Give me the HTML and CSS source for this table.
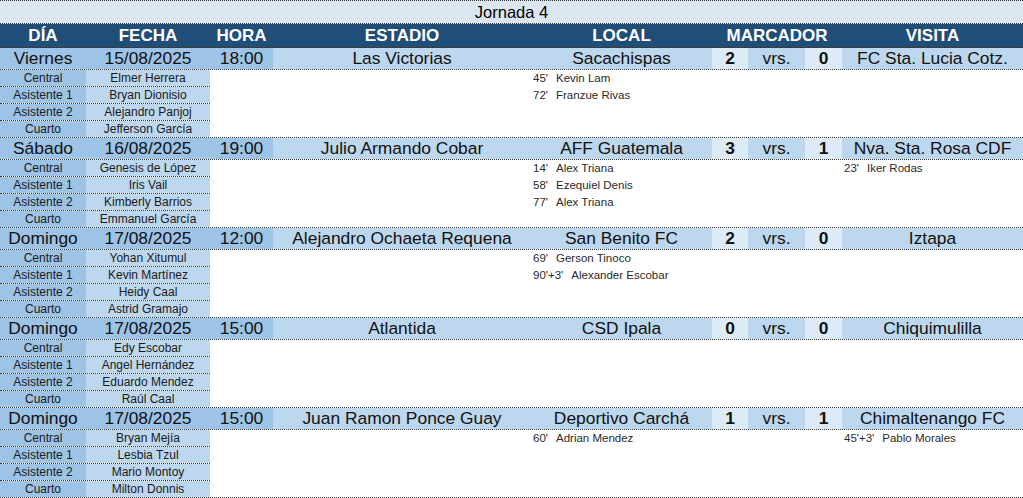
FILE: index.html
```html
<!DOCTYPE html>
<html lang="es">
<head>
<meta charset="utf-8">
<title>Jornada 4</title>
<link rel="stylesheet" href="styles.css">
</head>
<body>
<div class="sheet">
  <div class="title">Jornada 4</div>
  <div class="head">
    <div>DÍA</div><div>FECHA</div><div>HORA</div><div>ESTADIO</div><div>LOCAL</div><div class="span3">MARCADOR</div><div>VISITA</div>
  </div>

  <div class="match">
    <div class="row">
      <div class="c dk">Viernes</div><div class="c dk">15/08/2025</div><div class="c dk">18:00</div>
      <div class="c">Las Victorias</div><div class="c">Sacachispas</div>
      <div class="c sc">2</div><div class="c">vrs.</div><div class="c sc">0</div>
      <div class="c">FC Sta. Lucia Cotz.</div>
    </div>
    <div class="body">
      <div class="refs">
        <div class="ref"><span class="role">Central</span><span class="name">Elmer Herrera</span></div>
        <div class="ref"><span class="role">Asistente 1</span><span class="name">Bryan Dionisio</span></div>
        <div class="ref"><span class="role">Asistente 2</span><span class="name">Alejandro Panjoj</span></div>
        <div class="ref"><span class="role">Cuarto</span><span class="name">Jefferson García</span></div>
      </div>
      <div class="gap"></div>
      <div class="goals home">
        <div class="goal"><span class="min">45'</span>Kevin Lam</div>
        <div class="goal"><span class="min">72'</span>Franzue Rivas</div>
      </div>
      <div class="goals away"></div>
    </div>
  </div>

  <div class="match">
    <div class="row">
      <div class="c dk">Sábado</div><div class="c dk">16/08/2025</div><div class="c dk">19:00</div>
      <div class="c">Julio Armando Cobar</div><div class="c">AFF Guatemala</div>
      <div class="c sc">3</div><div class="c">vrs.</div><div class="c sc">1</div>
      <div class="c">Nva. Sta. Rosa CDF</div>
    </div>
    <div class="body">
      <div class="refs">
        <div class="ref"><span class="role">Central</span><span class="name">Genesis de López</span></div>
        <div class="ref"><span class="role">Asistente 1</span><span class="name">Iris Vail</span></div>
        <div class="ref"><span class="role">Asistente 2</span><span class="name">Kimberly Barrios</span></div>
        <div class="ref"><span class="role">Cuarto</span><span class="name">Emmanuel García</span></div>
      </div>
      <div class="gap"></div>
      <div class="goals home">
        <div class="goal"><span class="min">14'</span>Alex Triana</div>
        <div class="goal"><span class="min">58'</span>Ezequiel Denis</div>
        <div class="goal"><span class="min">77'</span>Alex Triana</div>
      </div>
      <div class="goals away">
        <div class="goal"><span class="min">23'</span>Iker Rodas</div>
      </div>
    </div>
  </div>

  <div class="match">
    <div class="row">
      <div class="c dk">Domingo</div><div class="c dk">17/08/2025</div><div class="c dk">12:00</div>
      <div class="c">Alejandro Ochaeta Requena</div><div class="c">San Benito FC</div>
      <div class="c sc">2</div><div class="c">vrs.</div><div class="c sc">0</div>
      <div class="c">Iztapa</div>
    </div>
    <div class="body">
      <div class="refs">
        <div class="ref"><span class="role">Central</span><span class="name">Yohan Xitumul</span></div>
        <div class="ref"><span class="role">Asistente 1</span><span class="name">Kevin Martínez</span></div>
        <div class="ref"><span class="role">Asistente 2</span><span class="name">Heidy Caal</span></div>
        <div class="ref"><span class="role">Cuarto</span><span class="name">Astrid Gramajo</span></div>
      </div>
      <div class="gap"></div>
      <div class="goals home">
        <div class="goal"><span class="min">69'</span>Gerson Tinoco</div>
        <div class="goal"><span class="min">90'+3'</span>Alexander Escobar</div>
      </div>
      <div class="goals away"></div>
    </div>
  </div>

  <div class="match">
    <div class="row">
      <div class="c dk">Domingo</div><div class="c dk">17/08/2025</div><div class="c dk">15:00</div>
      <div class="c">Atlantida</div><div class="c">CSD Ipala</div>
      <div class="c sc">0</div><div class="c">vrs.</div><div class="c sc">0</div>
      <div class="c">Chiquimulilla</div>
    </div>
    <div class="body">
      <div class="refs">
        <div class="ref"><span class="role">Central</span><span class="name">Edy Escobar</span></div>
        <div class="ref"><span class="role">Asistente 1</span><span class="name">Angel Hernández</span></div>
        <div class="ref"><span class="role">Asistente 2</span><span class="name">Eduardo Mendez</span></div>
        <div class="ref"><span class="role">Cuarto</span><span class="name">Raúl Caal</span></div>
      </div>
      <div class="gap"></div>
      <div class="goals home"></div>
      <div class="goals away"></div>
    </div>
  </div>

  <div class="match">
    <div class="row">
      <div class="c dk">Domingo</div><div class="c dk">17/08/2025</div><div class="c dk">15:00</div>
      <div class="c">Juan Ramon Ponce Guay</div><div class="c">Deportivo Carchá</div>
      <div class="c sc">1</div><div class="c">vrs.</div><div class="c sc">1</div>
      <div class="c">Chimaltenango FC</div>
    </div>
    <div class="body">
      <div class="refs">
        <div class="ref"><span class="role">Central</span><span class="name">Bryan Mejía</span></div>
        <div class="ref"><span class="role">Asistente 1</span><span class="name">Lesbia Tzul</span></div>
        <div class="ref"><span class="role">Asistente 2</span><span class="name">Mario Montoy</span></div>
        <div class="ref"><span class="role">Cuarto</span><span class="name">Milton Donnis</span></div>
      </div>
      <div class="gap"></div>
      <div class="goals home">
        <div class="goal"><span class="min">60'</span>Adrian Mendez</div>
      </div>
      <div class="goals away">
        <div class="goal"><span class="min">45'+3'</span>Pablo Morales</div>
      </div>
    </div>
  </div>
</div>
</body>
</html>
```

FILE: styles.css
```css
html, body {
  margin: 0;
  padding: 0;
  background: #ffffff;
}
body {
  font-family: "Liberation Sans", Arial, sans-serif;
  color: #000;
}
.sheet {
  width: 1023px;
}
.title {
  height: 22px;
  line-height: 22px;
  border-top: 1px dotted #333;
  border-bottom: 1px dotted #333;
  background: #dce6f1;
  text-align: center;
  font-size: 16.5px;
}
.head {
  display: grid;
  grid-template-columns: 86px 124px 63px 258px 181px 130px 181px;
  height: 23px;
  line-height: 23px;
  background: #1f4e79;
  color: #fff;
  font-weight: bold;
  font-size: 17px;
  text-align: center;
  border-bottom: 1px dotted #333;
}
.row {
  display: grid;
  grid-template-columns: 86px 124px 63px 258px 181px 36px 57px 37px 181px;
  height: 21px;
  border-bottom: 1px dotted #333;
  font-size: 17.4px;
  line-height: 21px;
  text-align: center;
}
.c {
  background: #bdd7ee;
  white-space: nowrap;
  color: #111;
}
.c.dk {
  background: #9dc3e6;
}
.c.sc {
  background: #ddebf7;
  font-weight: bold;
}
.body {
  display: flex;
  height: 67px;
  border-bottom: 1px dotted #333;
}
.refs {
  width: 210px;
  display: flex;
  flex-direction: column;
}
.ref {
  display: flex;
  height: 17px;
  box-sizing: border-box;
  border-bottom: 1px dotted #333;
  font-size: 12px;
  line-height: 16px;
  color: #1a1a1a;
}
.ref:last-child {
  border-bottom: none;
  height: 16px;
}
.role {
  width: 86px;
  background: #9dc3e6;
  text-align: center;
}
.name {
  width: 124px;
  background: #bdd7ee;
  text-align: center;
}
.gap {
  width: 321px;
}
.goals {
  display: flex;
  flex-direction: column;
  padding-left: 2px;
  box-sizing: border-box;
}
.goals.home {
  width: 311px;
}
.goals.away {
  width: 181px;
}
.goal {
  height: 17px;
  line-height: 17px;
  font-size: 11.5px;
  color: #2a2a2a;
  white-space: nowrap;
}
.min {
  margin-right: 8px;
}
```
